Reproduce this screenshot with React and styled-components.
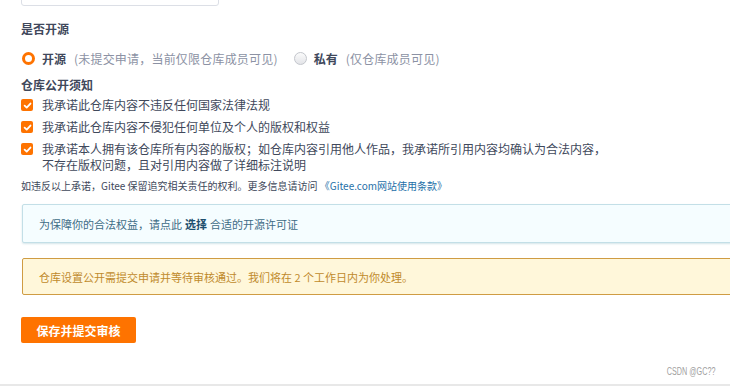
import React from "react";
import styled, { createGlobalStyle } from "styled-components";

const GlobalStyle = createGlobalStyle`
	html, body {
		margin: 0;
		padding: 0;
		background: #ffffff;
	}
	body {
		font-family: "Noto Sans CJK SC", "Noto Sans", "Liberation Sans", sans-serif;
		color: #40485b;
	}
`;

const rules = [
	["我承诺此仓库内容不违反任何国家法律法规"],
	["我承诺此仓库内容不侵犯任何单位及个人的版权和权益"],
	[
		"我承诺本人拥有该仓库所有内容的版权；如仓库内容引用他人作品，我承诺所引用内容均确认为合法内容，",
		"不存在版权问题，且对引用内容做了详细标注说明",
	],
];

const Check = () => (
	<svg width="9" height="9" viewBox="0 0 10 10">
		<path d="M1.8 5.2 L4.1 7.4 L8.3 2.8" fill="none" stroke="#fff" strokeWidth="2" strokeLinecap="round" strokeLinejoin="round" />
	</svg>
);

export default function App() {
	return (
		<Page>
			<GlobalStyle />
			<Content>
				<InputTail />
				<Heading top={13}>是否开源</Heading>
				<RadioRow>
					<RadioItem>
						<Radio checked />
						<RadioLabel>开源</RadioLabel>
						<Hint>(未提交申请，当前仅限仓库成员可见)</Hint>
					</RadioItem>
					<RadioItem>
						<Radio />
						<RadioLabel>私有</RadioLabel>
						<Hint>(仅仓库成员可见)</Hint>
					</RadioItem>
				</RadioRow>
				<Heading top={7}>仓库公开须知</Heading>
				<RuleList>
					{rules.map((lines, i) => (
						<RuleRow key={i}>
							<CheckBox>
								<Check />
							</CheckBox>
							<RuleText>
								{lines.map((l, j) => (
									<div key={j}>{l}</div>
								))}
							</RuleText>
						</RuleRow>
					))}
				</RuleList>
				<Footnote>
					如违反以上承诺，Gitee 保留追究相关责任的权利。更多信息请访问 <Link>《Gitee.com网站使用条款》</Link>
				</Footnote>
				<Notice variant="info" top={11}>
					为保障你的合法权益，请点此 <Strong>选择</Strong> 合适的开源许可证
				</Notice>
				<Notice variant="warn" top={15}>
					仓库设置公开需提交申请并等待审核通过。我们将在 2 个工作日内为你处理。
				</Notice>
				<SubmitButton>保存并提交审核</SubmitButton>
			</Content>
			<Footer>
				<Watermark>CSDN @GC??</Watermark>
			</Footer>
		</Page>
	);
}

const Page = styled.div`
	display: flex;
	flex-direction: column;
	width: 730px;
	height: 386px;
	overflow: hidden;
	box-sizing: border-box;
	border-bottom: 2px solid #e8e8e8;
`;

const Content = styled.div`
	display: flex;
	flex-direction: column;
	align-items: flex-start;
	padding-left: 21px;
	flex: 1;
`;

const InputTail = styled.div`
	width: 198px;
	height: 30px;
	margin-top: -24px;
	border: 1px solid #dcdfe6;
	border-radius: 3px;
	box-sizing: border-box;
`;

const Heading = styled.div`
	margin-top: ${(props) => props.top}px;
	font-size: 12px;
	line-height: 20px;
	font-weight: 700;
	color: #40485b;
`;

const RadioRow = styled.div`
	display: flex;
	gap: 15px;
	margin-top: 9px;
	height: 20px;
	align-items: center;
`;

const RadioItem = styled.div`
	display: flex;
	align-items: center;
	font-size: 12px;
`;

const Radio = styled.span`
	width: 13px;
	height: 13px;
	border-radius: 50%;
	box-sizing: border-box;
	margin-left: 1px;
	margin-right: 7px;
	border: ${(props) => (props.checked ? "3.5px solid #fe7300" : "1px solid #c3c6cc")};
	background: ${(props) => (props.checked ? "#fff" : "linear-gradient(#fbfbfb, #e3e4e8)")};
`;

const RadioLabel = styled.span`
	font-weight: 700;
	color: #40485b;
	margin-right: 8px;
`;

const Hint = styled.span`
	color: #8c92a4;
	letter-spacing: 0.2px;
`;

const RuleList = styled.div`
	display: flex;
	flex-direction: column;
	gap: 6px;
	margin-top: 2px;
`;

const RuleRow = styled.div`
	display: flex;
	align-items: flex-start;
	font-size: 12px;
	line-height: 16px;
`;

const CheckBox = styled.span`
	display: flex;
	align-items: center;
	justify-content: center;
	width: 12px;
	height: 12px;
	margin-top: 2px;
	margin-right: 9px;
	border-radius: 2px;
	background: #fe7300;
`;

const RuleText = styled.div`
	color: #40485b;
`;

const Footnote = styled.div`
	margin-top: 5px;
	font-size: 10px;
	line-height: 15px;
	color: #40485b;
`;

const Link = styled.span`
	color: #1e6fa8;
`;

const Notice = styled.div`
	box-sizing: border-box;
	align-self: stretch;
	margin-top: ${(props) => props.top}px;
	margin-left: 1px;
	margin-right: -10px;
	height: ${(props) => (props.variant === "info" ? 39 : 37)}px;
	display: flex;
	align-items: center;
	padding-left: 16px;
	font-size: 11px;
	border: 1px solid ${(props) => (props.variant === "info" ? "#c3dfe7" : "#cf9c43")};
	border-radius: 2px;
	background: ${(props) => (props.variant === "info" ? "#f5fdff" : "#fff7da")};
	color: ${(props) => (props.variant === "info" ? "#3e6c86" : "#c08a2c")};
	box-shadow: ${(props) => (props.variant === "info" ? "0 1px 2px rgba(150,190,200,0.4)" : "none")};
`;

const Strong = styled.b`
	color: #1d4f6e;
	margin: 0 3px;
`;

const SubmitButton = styled.button`
	margin-top: 22px;
	width: 115px;
	height: 26px;
	border: none;
	border-radius: 2px;
	background: #fe7300;
	color: #fff;
	font-family: inherit;
	font-size: 12px;
	font-weight: 700;
	cursor: pointer;
`;

const Footer = styled.div`
	display: flex;
	justify-content: flex-end;
	padding: 0 15px 6px 0;
`;

const Watermark = styled.span`
	display: inline-block;
	font-family: "Liberation Sans", sans-serif;
	font-size: 10px;
	line-height: 12px;
	color: #a0a0a0;
	transform: scaleX(0.72);
	transform-origin: right center;
`;
